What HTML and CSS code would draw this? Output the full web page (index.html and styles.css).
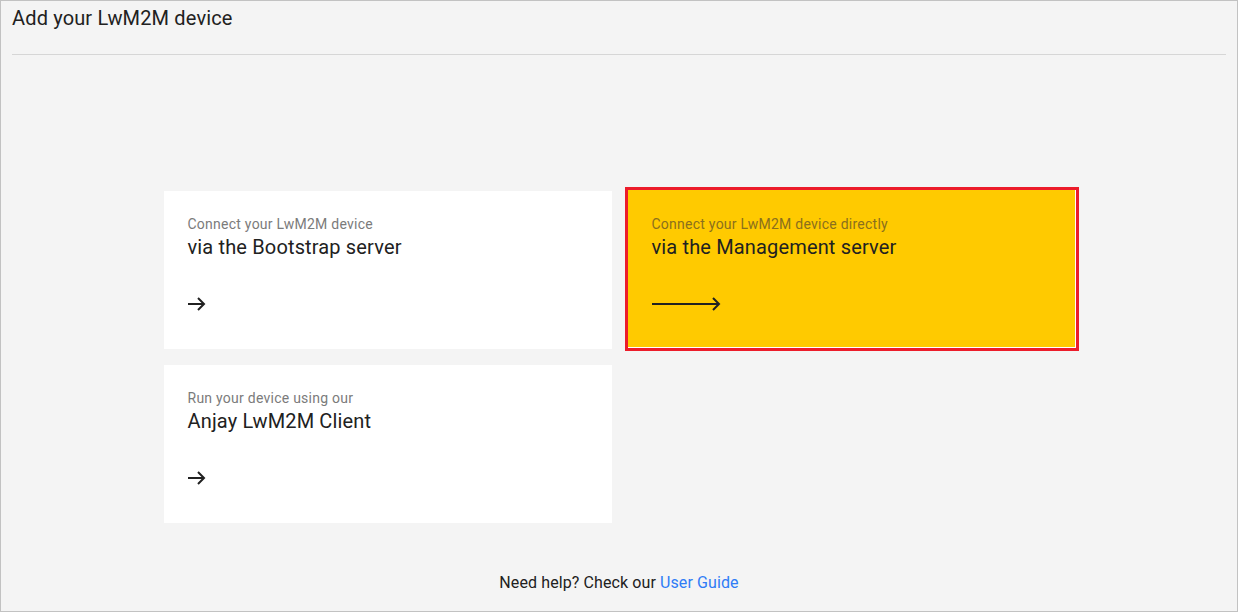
FILE: index.html
```html
<!DOCTYPE html>
<html>
<head>
<meta charset="utf-8">
<link rel="stylesheet" href="styles.css">
</head>
<body>
<div class="page">
  <header class="header">
    <h1 class="title">Add your LwM2M device</h1>
  </header>
  <main class="main">
    <div class="grid">
      <a class="card">
        <div class="sub">Connect your LwM2M device</div>
        <div class="head">via the Bootstrap server</div>
        <svg class="arrow" width="18" height="16" viewBox="0 0 18 16"><path d="M0 8H16M10 2L16 8L10 14" fill="none" stroke="#212121" stroke-width="2"/></svg>
      </a>
      <a class="card card--active">
        <div class="sub">Connect your LwM2M device directly</div>
        <div class="head">via the Management server</div>
        <svg class="arrow" width="70" height="16" viewBox="0 0 70 16"><path d="M0 8H67M61 2L67 8L61 14" fill="none" stroke="#212121" stroke-width="2"/></svg>
      </a>
      <a class="card">
        <div class="sub">Run your device using our</div>
        <div class="head">Anjay LwM2M Client</div>
        <svg class="arrow" width="18" height="16" viewBox="0 0 18 16"><path d="M0 8H16M10 2L16 8L10 14" fill="none" stroke="#212121" stroke-width="2"/></svg>
      </a>
    </div>
  </main>
  <footer class="footer">Need help? Check our <a class="link">User Guide</a></footer>
</div>
</body>
</html>
```
FILE: styles.css
```css
* { box-sizing: border-box; }
html, body { margin: 0; padding: 0; }
body {
  font-family: Roboto, "Noto Sans", sans-serif;
  color: #212121;
  background: #ffffff;
}
.page {
  width: 1238px;
  height: 612px;
  border: 1px solid #c2c2c2;
  background: #f4f4f4;
  display: flex;
  flex-direction: column;
}
.header {
  margin: 0 11px;
  height: 54px;
  border-bottom: 1px solid #d6d6d6;
}
.title {
  margin: 0;
  padding-top: 5px;
  font-size: 20px;
  font-weight: 400;
  line-height: 24px;
  letter-spacing: 0.15px;
  color: #212121;
}
.main {
  flex: 1;
  padding-top: 136px;
  display: flex;
  justify-content: center;
}
.grid {
  display: grid;
  grid-template-columns: 448px 448px;
  grid-template-rows: 158px 158px;
  gap: 16px;
  margin-left: 1px;
}
.card {
  background: #ffffff;
  padding: 25px 24px 0;
  display: flex;
  flex-direction: column;
  cursor: pointer;
}
.card--active {
  background: #ffca00;
  outline: 3px solid #ec1c2a;
  outline-offset: 0;
  box-shadow: inset -1px -1px 0 #ffffff;
  transform: translate(0, -1px);
  padding-top: 26px;
}
.sub {
  font-size: 14px;
  line-height: 16px;
  letter-spacing: 0.25px;
  color: #7b7b7b;
}
.card--active .sub { color: #8a6f1e; }
.head {
  margin-top: 3px;
  font-size: 20px;
  line-height: 24px;
  letter-spacing: 0.15px;
  color: #212121;
}
.arrow {
  margin-top: 37px;
  display: block;
}
.footer {
  text-align: center;
  font-size: 16px;
  line-height: 20px;
  letter-spacing: 0.1px;
  color: #212121;
  padding-bottom: 18px;
}
.link { color: #2f7cf6; cursor: pointer; }
```
